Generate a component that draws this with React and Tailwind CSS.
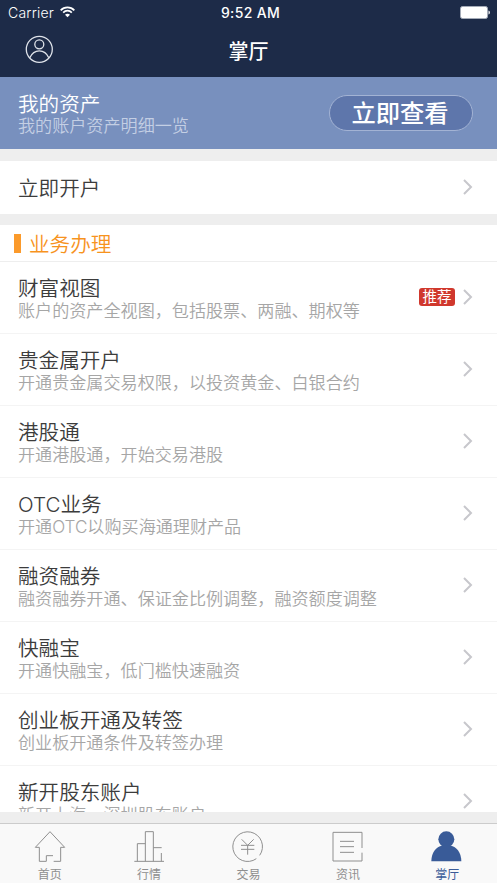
import clsx from 'clsx';

const SERVICES = [
  { title: '财富视图', desc: '账户的资产全视图，包括股票、两融、期权等', badge: '推荐' },
  { title: '贵金属开户', desc: '开通贵金属交易权限，以投资黄金、白银合约' },
  { title: '港股通', desc: '开通港股通，开始交易港股' },
  { title: 'OTC业务', desc: '开通OTC以购买海通理财产品' },
  { title: '融资融券', desc: '融资融券开通、保证金比例调整，融资额度调整' },
  { title: '快融宝', desc: '开通快融宝，低门槛快速融资' },
  { title: '创业板开通及转签', desc: '创业板开通条件及转签办理' },
  { title: '新开股东账户', desc: '新开上海、深圳股东账户' },
];

const TABS = [
  { label: '首页', icon: HomeIcon },
  { label: '行情', icon: MarketIcon },
  { label: '交易', icon: TradeIcon },
  { label: '资讯', icon: NewsIcon },
  { label: '掌厅', icon: PersonIcon, active: true },
];

export default function App() {
  return (
    <div className="flex flex-col h-[883px] w-[497px] overflow-hidden bg-[#eeeeee] font-['Inter','Noto_Sans_CJK_SC',sans-serif] font-[350]">
      <header className="h-[77px] shrink-0 bg-[#1d2b48] text-white">
        <StatusBar />
        <div className="grid grid-cols-3 items-center h-[46px] px-[25px]">
          <ProfileIcon />
          <h1 className="text-center text-[20px] leading-10 pt-[6px] font-medium">掌厅</h1>
        </div>
      </header>

      {/* 我的资产 */}
      <section className="flex justify-between h-[72px] shrink-0 pl-[18px] pr-6 pt-4 bg-[#7890be] text-white">
        <div>
          <h2 className="text-[20.6px] leading-[23px] font-[350]">我的资产</h2>
          <p className="text-[17.1px] leading-[20px] text-[#c4cfe4]">我的账户资产明细一览</p>
        </div>
        <button className="mt-[2px] w-36 h-9 rounded-full border border-[#a3b3d4] bg-[#5e76ab] text-[24.3px] leading-[34px] pr-[2px] font-medium">
          立即查看
        </button>
      </section>

      <section className="flex items-center justify-between mt-3 h-[53px] shrink-0 pl-[18px] pr-6 bg-white">
        <h2 className="text-[20.6px] leading-6 pt-[2px] text-[#3c3c3c] font-[350]">立即开户</h2>
        <Chevron />
      </section>

      {/* 业务办理 */}
      <section className="mt-[11px] flex-1 min-h-0 overflow-hidden bg-white">
        <div className="flex items-center h-[37px] pl-[14px] gap-2 border-b border-[#eeeeee]">
          <span className="w-[7px] h-[19px] bg-[#fb9a2b]" />
          <h2 className="text-[20.6px] leading-6 pt-[3px] text-[#f7931e] font-[350]">业务办理</h2>
        </div>
        {SERVICES.map(s => <ServiceRow key={s.title} {...s} />)}
      </section>

      <nav className="grid grid-cols-5 mt-[11px] h-[60px] shrink-0 border-t border-[#cccccc] bg-[#f9f9f9]">
        {TABS.map(({ label, icon: Icon, active }) => (
          <a
            key={label}
            className={clsx('flex flex-col items-center pt-[6px]', active ? 'text-[#395b98]' : 'text-[#8e8e8e]')}
          >
            <Icon />
            <span className="text-[12px] leading-[18px] mt-1 font-normal">{label}</span>
          </a>
        ))}
      </nav>
    </div>
  );
}

function ServiceRow({ title, desc, badge }) {
  return (
    <div className="flex justify-between h-[72px] pl-[18px] pr-6 border-b border-[#f4f4f4]">
      <div className="pt-[15px]">
        <h3 className="text-[20.6px] leading-[23px] text-[#3c3c3c] font-[350]">{title}</h3>
        <p className="text-[17.1px] leading-[21px] text-[#a6a6a6]">{desc}</p>
      </div>
      <div className="flex items-center gap-[7px] pb-px">
        {badge && (
          <span className="w-9 h-[18px] rounded-[3px] bg-[#d0382d] text-white text-[14.5px] leading-[18px] text-center font-normal">
            {badge}
          </span>
        )}
        <Chevron />
      </div>
    </div>
  );
}

function StatusBar() {
  return (
    <div className="grid grid-cols-3 items-center h-[26px] pl-2 pr-[7px] text-[14px]">
      <div className="flex items-center gap-[6px]">
        <span className="font-[350] leading-5 tracking-[0.2px]">Carrier</span>
        <svg className="w-[15px] h-3 mb-[2px]" viewBox="0 0 45 36" fill="none" stroke="currentColor" strokeWidth="5">
          <path d="M2 13C13 1 32 1 43 13" />
          <path d="M9.500 20C17 12 28 12 35.500 20" />
          <path d="M22.500 34L15 26C19 22 26 22 30 26Z" fill="currentColor" stroke="none" />
        </svg>
      </div>
      <span className="text-center font-medium leading-5 pl-[3px] tracking-[0.35px]">9:52 AM</span>
      <svg className="justify-self-end w-[30px] h-[13px] mb-px" viewBox="0 0 30 13">
        <rect x="0.500" y="0.500" width="27" height="12" rx="2" fill="#ffffff" stroke="#a4abb8" />
        <path d="M28.500 4.500C30.300 5 30.300 8 28.500 8.500Z" fill="#ffffff" />
      </svg>
    </div>
  );
}

function Chevron() {
  return (
    <svg className="w-[11px] h-4 mb-px" viewBox="0 0 11 16" fill="none" stroke="#c7c7cc" strokeWidth="2">
      <path d="M2 1L9 8L2 15" />
    </svg>
  );
}

function ProfileIcon() {
  return (
    <svg className="w-7 h-7" viewBox="0 0 28 28" fill="none" stroke="#dfe3ea" strokeWidth="1.300">
      <circle cx="14.300" cy="14.300" r="13" />
      <circle cx="14.300" cy="9.300" r="4.500" />
      <path d="M4.800 22.800C9 13.600 19.600 13.600 23.800 22.800" />
    </svg>
  );
}

function TabIcon({ children }) {
  return (
    <svg className="w-8 h-8" viewBox="0 0 96 96" fill="none" stroke="#8f8f8f" strokeWidth="3">
      {children}
    </svg>
  );
}

function HomeIcon() {
  return (
    <TabIcon>
      <path d="M16 94V52H4L48 5L92 52H80V94H59M16 94H37V77H57" />
    </TabIcon>
  );
}

function MarketIcon() {
  return (
    <TabIcon>
      <path d="M4 94H93M13 94V41H37M37 94V5H61V94M61 53H86M85 69V94" />
    </TabIcon>
  );
}

function TradeIcon() {
  return (
    <TabIcon>
      <path d="M83 76A44.500 44.500 0 1 0 73 86" />
      <path d="M29 28L47 46L65 28M47 46V74M27 46H67M27 58H67" />
    </TabIcon>
  );
}

function NewsIcon() {
  return (
    <TabIcon>
      <path d="M90 54V7H3V93H90V68M24 34H66M24 50H66M24 67H66" />
    </TabIcon>
  );
}

function PersonIcon() {
  return (
    <TabIcon>
      <g fill="#395b98" stroke="none">
        <circle cx="46" cy="28" r="24" />
        <path d="M1 94C1 67 16 50 33 47H59C76 50 91 67 91 94Z" />
      </g>
    </TabIcon>
  );
}
